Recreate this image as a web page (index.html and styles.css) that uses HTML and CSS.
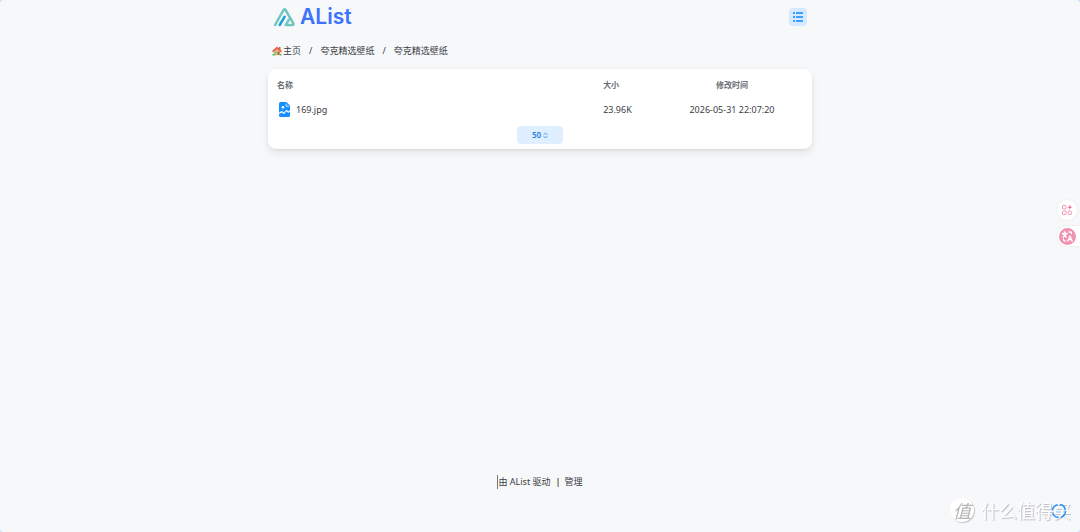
FILE: index.html
```html
<!DOCTYPE html>
<html lang="zh-CN">
<head>
<meta charset="utf-8">
<meta name="viewport" content="width=device-width, initial-scale=1">
<title>AList</title>
<link rel="stylesheet" href="styles.css">
</head>
<body>
<div class="page">
  <header class="container header">
    <a class="logo" href="#">
      <svg class="logo-mark" viewBox="0 0 22 20" fill="none" stroke-linecap="round" stroke-linejoin="round" aria-hidden="true">
        <path d="M1.600 18 10 3Q11 1.300 12 3L19.800 16.300Q20.600 18 18.800 18H12.200L15.200 12.800" stroke="#70c6be" stroke-width="2.500"/>
        <path d="M6.200 18 11.200 9.700" stroke="#1ba0d8" stroke-width="2.500"/>
      </svg>
      <span class="logo-text">AList</span>
    </a>
    <button class="layout-button" type="button" aria-label="列表视图">
      <svg class="layout-icon" viewBox="0 0 12 10" fill="#2492ff" aria-hidden="true">
        <path d="M1 0h2v2H1zM1 4h2v2H1zM1 8h2v2H1zM4 0H11v2H4zM4 4H11v2H4zM4 8H11v2H4z" fill-opacity=".85"/>
      </svg>
    </button>
  </header>
  <main class="container main">
    <nav class="breadcrumb" aria-label="路径">
      <a class="crumb home" href="#">
        <svg class="home-icon" viewBox="0 0 20 20" aria-hidden="true">
          <path d="M3 9 10 4l7 5v9H3z" fill="#f0c66c"/>
          <path d="M14 2h3v6h-3z" fill="#a66a4a"/>
          <path d="M10 1 0 10l2 2.500 8-6 8 6 2-2.500z" fill="#ec5f4f"/>
          <path d="M11 11h4v7h-4z" fill="#a9603e"/>
          <path d="M5 11h4v4H5z" fill="#55b4d8"/>
          <path d="M1 16h6v3H1zM15 16h4v3h-4z" fill="#62b564"/>
        </svg>
        <span>主页</span>
      </a>
      <span class="slash">/</span>
      <a class="crumb" href="#">夸克精选壁纸</a>
      <span class="slash">/</span>
      <a class="crumb" href="#">夸克精选壁纸</a>
    </nav>
    <section class="card">
      <table class="files">
        <thead>
          <tr><th class="name">名称</th><th class="size">大小</th><th class="time">修改时间</th></tr>
        </thead>
        <tbody>
          <tr>
            <td class="name">
              <a class="file" href="#">
                <svg class="file-icon" viewBox="0 0 11 15" aria-hidden="true">
                  <path d="M1.500 0H7.500L11 3.500V13.500Q11 15 9.500 15H1.500Q0 15 0 13.500V1.500Q0 0 1.500 0Z" fill="#1890ff"/>
                  <circle cx="4" cy="5.300" r="1.300" fill="#fff"/>
                  <path d="M0 11.500 2.800 9.500 4.800 11.500 7.500 8.500 9.300 10.200 11 8.700" fill="none" stroke="#fff" stroke-width="1.100"/>
                  <path d="M7.200 1.500v2.700H10" fill="none" stroke="#fff" stroke-width=".8"/>
                </svg>
                <span>169.jpg</span>
              </a>
            </td>
            <td class="size">23.96K</td>
            <td class="time">2026-05-31 22:07:20</td>
          </tr>
        </tbody>
      </table>
      <div class="pager">
        <select class="page-size" aria-label="每页数量"><option>50</option></select>
        <svg class="pager-icon" viewBox="0 0 6 8" fill="none" stroke="#3a86d8" stroke-linecap="round" stroke-linejoin="round" aria-hidden="true"><path d="M1 3 3 1 5 3M1 5 3 7 5 5"/></svg>
      </div>
    </section>
  </main>
  <footer class="footer">
    <a class="powered" href="#">由 AList 驱动</a>
    <span class="divider"></span>
    <a href="#">管理</a>
  </footer>
</div>

<aside class="tools">
  <button class="tool apps" type="button" aria-label="应用">
    <svg class="apps-icon" viewBox="0 0 12 12" fill="none" stroke="#f19ab5" aria-hidden="true">
      <rect x="1.500" y="1.500" width="3.500" height="3.500" rx=".5"/><rect x="1.500" y="7" width="3.500" height="3.500" rx=".5"/><circle cx="8.800" cy="8.800" r="1.900"/>
      <path d="M8.800 .8 9.500 2.600 11.300 3.300 9.500 4 8.800 5.800 8.100 4 6.300 3.300 8.100 2.600Z" fill="#ec6f96" stroke="none"/>
    </svg>
  </button>
  <button class="tool translate" type="button" aria-label="翻译">
    <svg class="translate-icon" viewBox="0 0 17 17" fill="none" stroke="#fff" stroke-width="1.300" stroke-linecap="round" stroke-linejoin="round" aria-hidden="true">
      <circle cx="8.500" cy="8.500" r="8.500" fill="#f093b0" stroke="none"/>
      <path d="M3.500 5.500H8M5.800 3.700v1.800M4 9.200Q7 8 7.500 5.500M4.500 6.500 7.200 9M8.800 13.200 11 8l2.200 5.200M9.600 11.600h2.800M10 4h1.500Q12.500 4 12.500 5.500M4.500 11v.8Q4.500 13 6.300 13"/>
    </svg>
  </button>
</aside>

<div class="watermark">
  <span class="watermark-badge">值</span>
  <span class="watermark-text">什么值得买</span>
</div>
<button class="spinner" type="button" aria-label="更多">
  <svg class="spinner-icon" viewBox="0 0 16 16" fill="none" stroke="#2492ff" aria-hidden="true">
    <circle cx="8" cy="8" r="6.500" stroke-width="1.500" stroke-dasharray="8 2.200"/>
    <path d="M5.500 6.500h5M5 9h5" stroke="#9dccfa"/>
  </svg>
</button>
</body>
</html>
```

FILE: styles.css
```css
* { box-sizing: border-box; }

html { background: #cfe1f5; }

body {
  margin: 0;
  color: #3b4045;
  font: 9px/14px "Noto Sans", "Noto Sans CJK SC", sans-serif;
}

a { color: inherit; text-decoration: none; }

button {
  display: grid;
  place-items: center;
  padding: 0;
  border: 0;
  cursor: pointer;
}

svg { display: block; flex: none; }

.page {
  display: flex;
  flex-direction: column;
  min-height: 100vh;
  border-radius: 4px;
  background: #f7f8fa;
}

.container {
  width: calc(100% - 16px);
  max-width: 544px;
  margin: 0 auto;
}

.header {
  display: flex;
  align-items: center;
  justify-content: space-between;
  height: 34px;
  padding: 0 5px;
}

.logo { display: flex; align-items: center; gap: 4px; }

.logo-mark { width: 23px; height: 20px; }

.logo-text {
  color: #3b72ff;
  font: 600 21px/28px Inter, sans-serif;
}

.layout-button {
  width: 18px;
  height: 18px;
  border-radius: 4px;
  background: #d5e9ff;
}

.layout-icon { width: 12px; height: 10px; }

.main { flex: 1; }

.breadcrumb {
  display: flex;
  align-items: center;
  gap: 8px;
  height: 35px;
  padding: 0 4px 1px;
}

.home { display: flex; align-items: center; gap: 1px; }

.home-icon { width: 10px; height: 10px; }

.card {
  padding: 9px 9px 5px;
  border-radius: 8px;
  background: #fff;
  box-shadow: 0 4px 8px rgb(0 0 0 / 8%), 0 1px 3px rgb(0 0 0 / 6%);
}

.files {
  width: 100%;
  table-layout: fixed;
  border-collapse: collapse;
}

.files th, .files td { padding: 0; text-align: left; }

.files th {
  height: 14px;
  color: #696e75;
  font-size: 8px;
  font-weight: 700;
}

.files td { height: 34px; padding-top: 1px; }

.files .size { width: 11%; }

.files .time { width: 27%; text-align: center; }

.file { display: flex; align-items: center; gap: 6px; padding-left: 2px; }

.file-icon { width: 11px; height: 15px; }

.pager {
  display: grid;
  width: 46px;
  margin: 0 auto;
}

.page-size, .pager-icon { grid-area: 1 / 1; }

.page-size {
  width: 100%;
  height: 18px;
  padding: 0 0 0 15px;
  border: 0;
  border-radius: 4px;
  appearance: none;
  background: #dfefff;
  color: #2380df;
  font: 600 8px/18px "Noto Sans", sans-serif;
}

.pager-icon {
  width: 5px;
  height: 7px;
  align-self: center;
  justify-self: end;
  margin-right: 15px;
  pointer-events: none;
}

.footer {
  display: flex;
  align-items: center;
  justify-content: center;
  gap: 6px;
  padding-bottom: 43px;
}

.powered { border-left: 1px solid #777; }

.divider {
  width: 2px;
  height: 9px;
  border-left: 1px solid #d9a860;
  background: #7f9fc0;
}

.tools {
  position: fixed;
  top: 200px;
  right: 0;
  display: flex;
  flex-direction: column;
  align-items: flex-end;
  gap: 6px;
}

.tool {
  height: 20px;
  background: #fff;
  box-shadow: 0 0 3px rgb(0 0 0 / 8%);
}

.apps { width: 20px; margin-right: 3px; border-radius: 10px; }

.apps-icon { width: 12px; height: 12px; }

.translate {
  width: 23px;
  justify-items: start;
  padding-left: 2px;
  border-radius: 10px 0 0 10px;
}

.translate-icon { width: 17px; height: 17px; }

.spinner {
  position: fixed;
  right: 13px;
  bottom: 13px;
  background: transparent;
}

.spinner-icon { width: 16px; height: 16px; }

.watermark {
  position: fixed;
  right: 9px;
  bottom: 9px;
  display: flex;
  align-items: center;
  gap: 7px;
  color: #fff;
  font: 18px/26px "Noto Sans CJK SC", sans-serif;
  text-shadow: 1px 1px 1px #b9bcc0;
  pointer-events: none;
}

.watermark-badge {
  width: 24px;
  height: 24px;
  border-radius: 50%;
  background: #fff;
  box-shadow: 1px 1px 1px #c3c5c8;
  color: #b5b5b5;
  font-style: italic;
  line-height: 24px;
  text-align: center;
  text-shadow: none;
}
```
